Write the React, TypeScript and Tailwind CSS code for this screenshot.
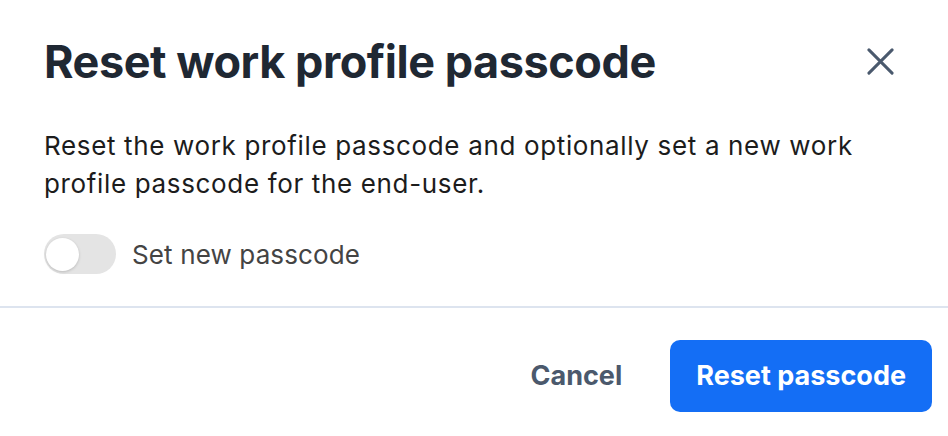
import React, { useState } from 'react';

export default function App() {
    const [enabled, setEnabled] = useState(false);

    return (
        <div className="w-[948px] h-[436px] bg-white overflow-hidden flex flex-col" style={{ fontFamily: 'Inter, "Noto Sans", sans-serif' }}>
            {/* Header */}
            <div className="flex items-center justify-between pl-[44px] pr-[44px] pt-[35px]">
                <h2 className="text-[45px] leading-[53px] font-bold tracking-[-0.01em] text-[#1f2833]">
                    Reset work profile passcode
                </h2>
                <button className="w-12 h-12 flex items-center justify-center text-[#4a596d]" aria-label="Close">
                    <svg width="27" height="27" viewBox="0 0 28 28" fill="none" stroke="currentColor" strokeWidth="3.1" strokeLinecap="round">
                        <path d="M2 2l24 24M26 2L2 26" />
                    </svg>
                </button>
            </div>

            {/* Content */}
            <div className="px-[44px] pt-[39px] pb-[32px] flex flex-col gap-[31px]">
                <p className="text-[26px] leading-[38px] tracking-[0.025em] text-[#1c1c1c] max-w-[840px]">
                    Reset the work profile passcode and optionally set a new work profile passcode for the end-user.
                </p>
                <label className="flex items-center gap-[16px] cursor-pointer">
                    <button
                        onClick={() => setEnabled(!enabled)}
                        className={`relative w-[72px] h-[40px] rounded-full flex items-center px-[2px] ${enabled ? 'bg-[#146ef5] justify-end' : 'bg-[#e4e4e4] justify-start'}`}
                    >
                        <span className="w-[33px] h-[33px] rounded-full bg-white shadow-[0_1px_3px_rgba(0,0,0,0.18)]" />
                    </button>
                    <span className="text-[26px] tracking-[0.005em] text-[#444444]">Set new passcode</span>
                </label>
            </div>

            {/* Footer */}
            <div className="border-t-2 border-[#dde4ef] flex items-start justify-end gap-[24px] pt-[32px] pr-[16px]">
                <button className="h-[72px] px-[24px] text-[27px] font-bold text-[#4b596c]">
                    Cancel
                </button>
                <button className="h-[72px] px-[26px] rounded-[10px] bg-[#146ef5] text-white text-[27px] font-bold">
                    Reset passcode
                </button>
            </div>
        </div>
    );
}
